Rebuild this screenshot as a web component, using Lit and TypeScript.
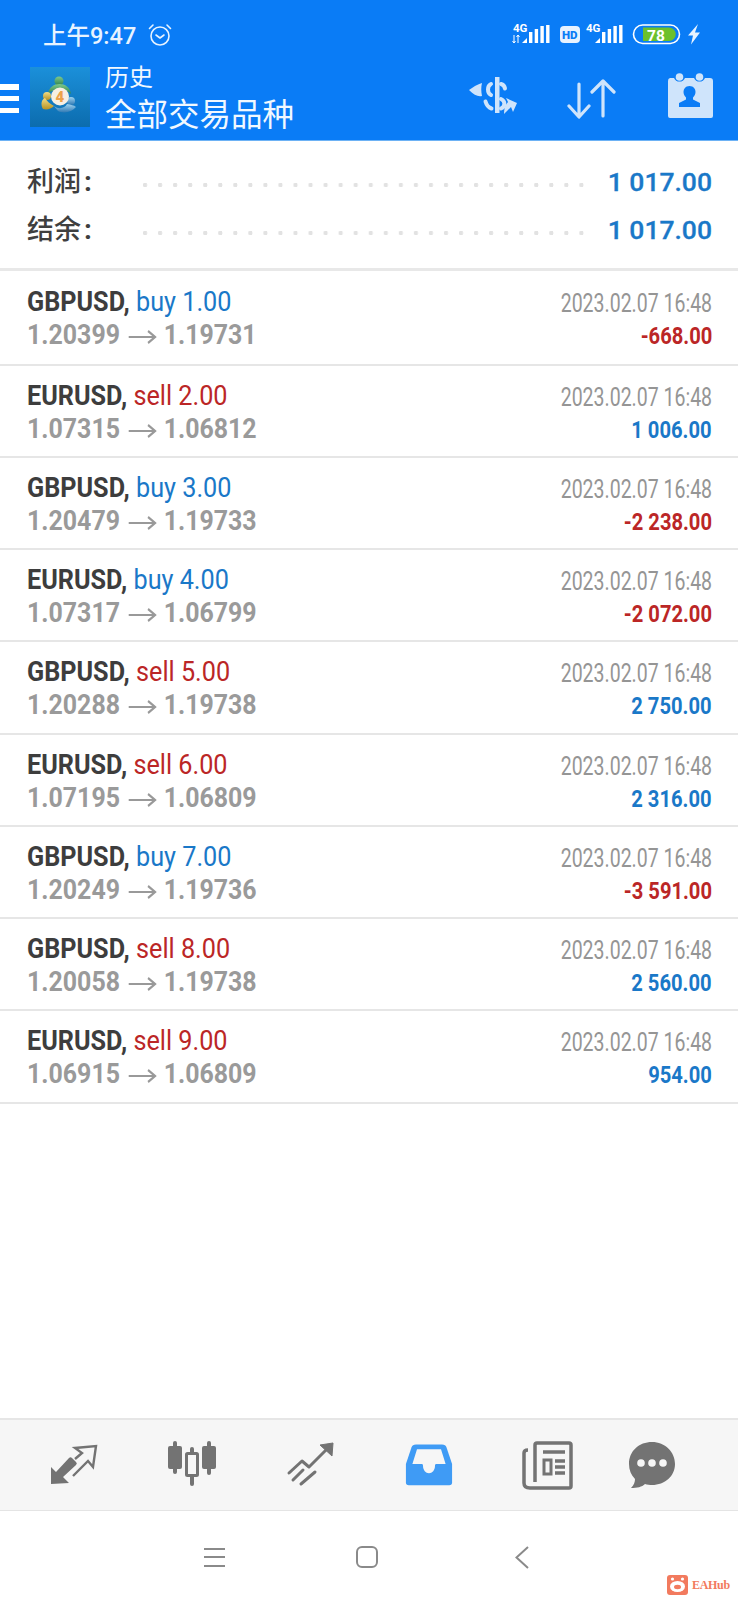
import { LitElement, html, css, svg } from "lit";
import { customElement } from "lit/decorators.js";

const rows = [
  ["GBPUSD,", "buy 1.00", "1.20399", "1.19731", "-668.00"],
  ["EURUSD,", "sell 2.00", "1.07315", "1.06812", "1 006.00"],
  ["GBPUSD,", "buy 3.00", "1.20479", "1.19733", "-2 238.00"],
  ["EURUSD,", "buy 4.00", "1.07317", "1.06799", "-2 072.00"],
  ["GBPUSD,", "sell 5.00", "1.20288", "1.19738", "2 750.00"],
  ["EURUSD,", "sell 6.00", "1.07195", "1.06809", "2 316.00"],
  ["GBPUSD,", "buy 7.00", "1.20249", "1.19736", "-3 591.00"],
  ["GBPUSD,", "sell 8.00", "1.20058", "1.19738", "2 560.00"],
  ["EURUSD,", "sell 9.00", "1.06915", "1.06809", "954.00"],
];

const signal = (x: number) => svg`<g fill="#fff" transform="translate(${x} 0)">
  <path d="M0 20 L5 15 V20Z"/><rect x="7" y="9" width="3.4" height="11"/><rect x="12.700" y="6" width="3.4" height="14"/><rect x="18.400" y="3" width="3.4" height="17"/><rect x="24.100" y="2" width="3.4" height="18"/></g>`;

@customElement("app-root")
export class AppRoot extends LitElement {
  static styles = css`
    :host { display: block; width: 738px; height: 1600px; background: #fff; font-family: Roboto, "Noto Sans CJK SC", sans-serif; overflow: hidden; }
    .page { display: flex; flex-direction: column; height: 1600px; }
    .cjk { font-family: "Noto Sans CJK SC", sans-serif; }

    header { height: 141px; flex: none; background: #0a7cf6; color: #fff; border-bottom: 1px solid #6db2f5; box-sizing: border-box; display: flex; flex-direction: column; }
    .status { height: 62px; flex: none; display: flex; align-items: center; padding: 8px 0 0 43px; box-sizing: border-box; }
    .time { font-size: 23.5px; font-weight: 500; line-height: 26px; color: #e8f3ff; width: 104px; white-space: nowrap; }
    .alarm { width: 26px; height: 26px; display: block; }
    .status-right { margin-left: auto; display: block; width: 190px; height: 28px; margin-right: 36px; }
    .bar { flex: 1; display: flex; align-items: flex-start; margin-top: 5px; }
    .burger { width: 19px; height: 29px; margin-top: 17px; flex: none; display: flex; flex-direction: column; justify-content: space-between; }
    .burger i { display: block; height: 5.5px; background: #fff; }
    .logo { width: 60px; height: 60px; margin-left: 11px; flex: none; display: block; }
    .titles { margin-left: 15px; color: #f1f8ff; width: 330px; flex: none; }
    .t1 { font-size: 24px; line-height: 24px; margin-top: -3px; }
    .t2 { font-size: 31.500px; line-height: 32px; margin-top: 8px; white-space: nowrap; }
    .tools { display: grid; grid-template-columns: 107px 100px 46px; align-items: start; margin-left: 25px; margin-top: -2px; }
    .tools svg { display: block; fill: #cfe4fb; }
    .tools .dollar { width: 70px; height: 60px; }
    .tools .dollar .arc { fill: none; stroke: #cfe4fb; stroke-width: 4; stroke-linecap: round; }
    .tools .updown { width: 50px; height: 42px; margin-top: 13px; fill: none; stroke: #cfe4fb; stroke-width: 3.2; stroke-linecap: round; stroke-linejoin: round; }
    .tools .cal { width: 46px; height: 46px; margin-top: 7px; }

    .summary { height: 130px; flex: none; box-sizing: border-box; border-bottom: 3px solid #e8e8e8; padding: 17px 26px 0 27px; display: flex; flex-direction: column; }
    .sum { height: 48px; display: flex; align-items: center; }
    .sum .k { width: 116px; font-size: 27px; font-weight: 500; color: #3f3f3f; line-height: 32px; flex: none; white-space: nowrap; margin-bottom: 2px; }
    .sum .k b { font-family: Roboto, sans-serif; font-weight: 700; font-size: 28px; margin-left: 3px; }
    .sum .dots { flex: 1; height: 4px; margin: 5px 22px 0 0; background: radial-gradient(circle at 2px 2px, #e2e2e2 2px, transparent 2.4px) 0 0 / 15.05px 4px repeat-x; }
    .sum .v { font-size: 26.5px; font-weight: 500; color: #1a78c8; -webkit-text-stroke: .3px #1a78c8; line-height: 32px; white-space: nowrap; }

    .row { height: 92.25px; flex: none; box-sizing: border-box; border-bottom: 2px solid #e6e6e6; display: flex; justify-content: space-between; align-items: center; padding: 0 26px 0 27px; }
    .row.first { height: 94.5px; }
    .left, .right { display: flex; flex-direction: column; white-space: nowrap; }
    .left { padding-top: 2px; }
    .right { align-items: flex-end; padding-top: 6px; }
    .l1, .l2 { height: 33px; line-height: 33px; transform-origin: 0 50%; }
    .l1 { font-size: 28px; transform: scaleX(.9); }
    .l1 b { color: #3d3d3d; font-weight: 700; }
    .l1 .sell { color: #bb2626; }
    .l1 .buy { color: #1a78c8; }
    .l2 { font-size: 28px; font-weight: 700; color: #9a9a9a; transform: scaleX(.89); }
    .ar { display: inline-block; width: 32px; height: 14px; margin: 0 8px 0 9px; vertical-align: 0; stroke: #999; stroke-width: 2.2; fill: none; }
    .r1, .r2 { height: 33px; line-height: 33px; transform-origin: 100% 50%; }
    .r1 { font-size: 25px; color: #959595; transform: scaleX(.78); }
    .r2 { font-size: 24px; font-weight: 700; transform: scaleX(.84); }
    .pos { color: #1a78c8; }
    .neg { color: #bb2626; }

    .spacer { flex: 1; }

    nav.tabs { height: 93px; flex: none; box-sizing: border-box; background: #f6f6f6; border-top: 2px solid #e6e6e6; border-bottom: 1px solid #e4e4e4; padding-left: 14px; display: grid; grid-template-columns: repeat(5, 118.5px) 90px; justify-items: center; align-items: center; }
    nav.tabs svg { display: block; width: 52px; height: 52px; }
    nav.tabs svg.wide { width: 70px; height: 60px; }
    nav.tabs svg.shift { margin-left: 4px; }
    nav.tabs svg.inbox { width: 48px; height: 48px; margin-bottom: 2px; }
    .sys { height: 89px; flex: none; position: relative; box-sizing: border-box; display: grid; grid-template-columns: 153px 155px 30px; padding: 31px 0 0 199px; }
    .sys svg.n { display: block; width: 30px; height: 30px; fill: none; stroke: #8a8a8a; stroke-width: 2; }
    .wm { position: absolute; left: 667px; top: 64px; display: flex; align-items: center; gap: 4px; }
    .wm svg { width: 21px; height: 20px; display: block; }
    .wm span { font-family: "Liberation Serif", serif; font-weight: 700; font-size: 12px; letter-spacing: -.3px; color: #f27a5e; }
  `;

  render() {
    return html`<div class="page">
      <header>
        <div class="status">
          <span class="time"><span class="cjk">上午</span>9:47</span>
          <svg class="alarm" viewBox="0 0 26 26" fill="none" stroke="#e8f3ff" stroke-width="1.6" stroke-linecap="round" stroke-linejoin="round">
            <circle cx="13" cy="14" r="9"/><path d="M9 13l4 3 4-3M2.500 6.500 6 3M23.500 6.500 20 3"/>
          </svg>
          <svg class="status-right" viewBox="0 -2 190 28">
            <text x="1" y="9" font-size="11.500" font-weight="700" fill="#fff" font-family="Roboto">4G</text>
            <path d="M2 12v8M0.500 18l1.500 2 1.500-2M6 20v-8M4.500 14 6 12l1.500 2" stroke="#fff" stroke-width="1" fill="none"/>
            ${signal(10)}
            <rect x="48" y="3" width="20" height="17" rx="4" fill="#e7f2ff"/>
            <text x="50" y="16" font-size="11.500" font-weight="900" fill="#0a7cf6" font-family="Roboto">HD</text>
            <text x="74" y="9" font-size="11.500" font-weight="700" fill="#fff" font-family="Roboto">4G</text>
            ${signal(83)}
            <rect x="121.500" y="2" width="46" height="18.500" rx="9.200" fill="none" stroke="#fff" stroke-width="1.600"/>
            <path d="M131 4.500h26a6.700 6.700 0 0 1 0 13.500h-26z" fill="#6cc02c"/>
            <text x="135" y="17.500" font-size="15.500" font-weight="700" fill="#fff" font-family="Roboto">78</text>
            <path d="M186 1 176 12.500h5l-2 9 9-12h-5z" fill="#e8f3ff"/>
          </svg>
        </div>
        <div class="bar">
          <div class="burger"><i></i><i></i><i></i></div>
          <svg class="logo" viewBox="0 0 60 60">
            <defs>
              <linearGradient id="lg" x1="0" y1="0" x2="0" y2="1"><stop offset="0" stop-color="#1b90da"/><stop offset="1" stop-color="#0c6cae"/></linearGradient>
              <linearGradient id="gr" x1="0" y1="0" x2="0" y2="1"><stop offset="0" stop-color="#7fc98a"/><stop offset="1" stop-color="#2f8350"/></linearGradient>
              <linearGradient id="go" x1="0" y1="0" x2="0" y2="1"><stop offset="0" stop-color="#f1dd86"/><stop offset="1" stop-color="#b79324"/></linearGradient>
              <linearGradient id="bl" x1="0" y1="0" x2="0" y2="1"><stop offset="0" stop-color="#9fd3f0"/><stop offset="1" stop-color="#2f79b4"/></linearGradient>
            </defs>
            <rect width="60" height="60" fill="url(#lg)"/>
            <circle cx="29" cy="14" r="4.500" fill="url(#gr)"/>
            <path d="M18 27C19 20 24 17 29.500 17 35 17 40 20 41 27 36 21 23 21 18 27z" fill="url(#gr)"/>
            <circle cx="17" cy="29" r="4" fill="url(#go)"/>
            <path d="M13 42C10 37 12 32 15 31 17 34 20 37 24 39 21 42 17 43 13 42z" fill="url(#go)"/>
            <circle cx="41" cy="34" r="4" fill="url(#bl)"/>
            <path d="M24 39C29 43 35 41 37 37 41 38 44 38 46 40 42 45 34 47 28 44z" fill="url(#bl)"/>
            <circle cx="30" cy="29.500" r="9" fill="#f6efe3"/>
            <text x="25.500" y="35" font-size="15" font-weight="900" fill="#eda24a" font-family="Roboto">4</text>
          </svg>
          <div class="titles cjk">
            <div class="t1">历史</div>
            <div class="t2">全部交易品种</div>
          </div>
          <div class="tools">
            <svg class="dollar" viewBox="0 0 70 60">
              <path d="M35 12h4.500v36H35z"/>
              <path class="arc" d="M41 19C43 19.500 44.500 21 45 23.500M31 19C27 21 27 28 31 30M41 34C45.500 36 45.500 41.500 41 43.500M25.500 36.500C26.500 40 28.500 42.500 31.500 43.500"/>
              <path d="M9 25 15 21C17 20 19 19 22 18 21 22 21 26 22 31 18 32 14 30 9 25z"/>
              <path d="M57 38 46 33 48 37C45 40 44 44 44 49 47 46 49 44 51 42L53 47z"/>
            </svg>
            <svg class="updown" viewBox="0 0 50 42">
              <path d="M12 6v32M2 28l10 11 10-11M36 38V3M25 14 36 3l11 11"/>
            </svg>
            <svg class="cal" viewBox="0 0 46 46">
              <path d="M3 6h4a6 6 0 0 0 11 0h9a6 6 0 0 0 11 0h5a3 3 0 0 1 3 3v35a2 2 0 0 1-2 2H3a2 2 0 0 1-2-2V9a3 3 0 0 1 2-3z"/>
              <circle cx="12.500" cy="5" r="3.800"/><circle cx="32.500" cy="5" r="3.800"/>
              <path fill="#0a7cf6" d="M22.500 14c-4 0-6 3-6 6 0 2 1 4 2.500 5.500v2L12 31v4h21v-4l-7-3.500v-2c1.500-1.500 2.500-3.500 2.500-5.500 0-3-2-6-6-6z"/>
            </svg>
          </div>
        </div>
      </header>

      <section class="summary">
        <div class="sum"><span class="k cjk">利润<b>:</b></span><span class="dots"></span><span class="v">1 017.00</span></div>
        <div class="sum"><span class="k cjk">结余<b>:</b></span><span class="dots"></span><span class="v">1 017.00</span></div>
      </section>

      ${rows.map((r, i) => {
        const kind = r[1].split(" ")[0];
        const neg = r[4].startsWith("-");
        return html`<div class="row ${i === 0 ? "first" : ""}">
          <div class="left">
            <div class="l1"><b>${r[0]}</b> <span class=${kind}>${r[1]}</span></div>
            <div class="l2">${r[2]}<svg class="ar" viewBox="0 0 32 14"><path d="M0 7h30M22 1l8 6-8 6"/></svg>${r[3]}</div>
          </div>
          <div class="right">
            <div class="r1">2023.02.07 16:48</div>
            <div class="r2 ${neg ? "neg" : "pos"}">${r[4]}</div>
          </div>
        </div>`;
      })}

      <div class="spacer"></div>

      <nav class="tabs">
        <svg class="wide shift" viewBox="0 0 70 60">
          <path d="M11 49V32l5 5L29 23a2 2 0 0 1 3 0l4 4a2 2 0 0 1 0 3L23 42l6 6z" fill="#737373"/>
          <path d="M35 24l7-6-7-5 21-2-3 21-5-6-15 15" fill="none" stroke="#737373" stroke-width="2.400"/>
        </svg>
        <svg viewBox="0 0 52 52" fill="#737373">
          <rect x="7" y="2" width="4" height="33" rx="2"/><rect x="2" y="7" width="14" height="23" rx="2"/>
          <rect x="41" y="2" width="4" height="34" rx="2"/><rect x="36" y="7" width="14" height="23" rx="2"/>
          <rect x="24" y="8" width="4" height="39" rx="2"/>
          <rect x="20.500" y="14.500" width="11" height="22" rx="1" fill="#f6f6f6" stroke="#737373" stroke-width="3"/>
        </svg>
        <svg class="wide" viewBox="0 0 70 60">
          <path d="M14 38 27 26l7 6 17-17M18 45 28 35M26 49 40 37" fill="none" stroke="#737373" stroke-width="3" stroke-linecap="round" stroke-linejoin="round"/>
          <path d="M45 10 58 8 57 21z" fill="#737373" stroke="#737373" stroke-width="1" stroke-linejoin="round"/>
        </svg>
        <svg class="inbox" viewBox="0 0 52 52">
          <path fill="#3f9bf5" d="M12 5h28c3 0 4 1 5 3l6 18v20a3 3 0 0 1-3 3H4a3 3 0 0 1-3-3V26L7 8c1-2 2-3 5-3z"/>
          <path fill="#f6f6f6" d="M13 10h26l5 16H34c-1 0-1.500.5-1.500 2 0 5-3 8-6.500 8s-6.500-3-6.500-8c0-1.500-.5-2-1.500-2H8z"/>
        </svg>
        <svg viewBox="0 0 52 52" fill="none" stroke="#737373">
          <path d="M14 43V6a2 2 0 0 1 2-2h32a2 2 0 0 1 2 2v41a2 2 0 0 1-2 2H9c-4 0-6-2-6-5V14c0-2 1-3 4-3" stroke-width="3.500"/>
          <path d="M22 13h22" stroke-width="3.500"/>
          <rect x="23" y="21" width="7" height="14" stroke-width="3"/>
          <path d="M34 22h10M34 28h10M34 34h10" stroke-width="3.500"/>
        </svg>
        <svg viewBox="0 0 52 52" fill="#737373">
          <path d="M26 3C13 3 3 12 3 25c0 6 2 11 6 15 0 3-1 6-4 9 6 0 11-1 14-4 2 .6 5 1 7 1 13 0 23-9 23-21S39 3 26 3z"/>
          <circle cx="15" cy="24" r="3.800" fill="#f6f6f6"/><circle cx="26" cy="24" r="3.800" fill="#f6f6f6"/><circle cx="37" cy="24" r="3.800" fill="#f6f6f6"/>
        </svg>
      </nav>

      <div class="sys">
        <svg class="n" viewBox="0 0 30 30"><path d="M5 7h21M5 15h21M5 24h21"/></svg>
        <svg class="n" viewBox="0 0 30 30"><rect x="5" y="5" width="20" height="20" rx="5"/></svg>
        <svg class="n" viewBox="0 0 30 30"><path d="M21 5 9.500 15.500 21 26"/></svg>
        <div class="wm">
          <svg viewBox="0 0 21 20">
            <rect width="21" height="20" rx="3" fill="#f27a5e"/>
            <ellipse cx="10.500" cy="11.500" rx="7.500" ry="5.500" fill="#fff"/>
            <circle cx="5.500" cy="4" r="1.600" fill="#fff"/><circle cx="15.500" cy="4" r="1.600" fill="#fff"/>
            <ellipse cx="10.500" cy="12" rx="3.500" ry="2.200" fill="#f27a5e"/>
          </svg>
          <span>EAHub</span>
        </div>
      </div>
    </div>`;
  }
}
